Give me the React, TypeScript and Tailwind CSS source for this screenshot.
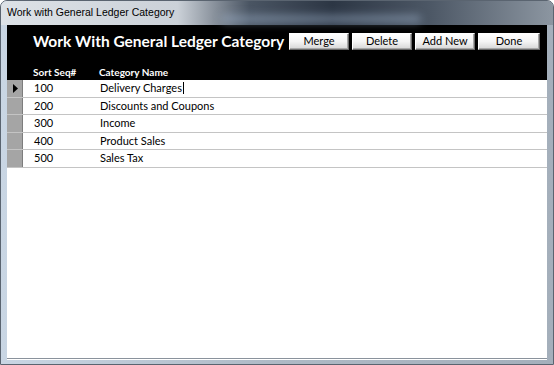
import React from "react";

const rows = [
  { seq: "100", name: "Delivery Charges" },
  { seq: "200", name: "Discounts and Coupons" },
  { seq: "300", name: "Income" },
  { seq: "400", name: "Product Sales" },
  { seq: "500", name: "Sales Tax" },
];

function Btn({ label, w }: { label: string; w: string }) {
  return (
    <div className={`${w} h-[17px] flex items-center justify-center text-[11px] text-black bg-gradient-to-b from-[#ffffff] via-[#f4f4f4] to-[#d6d6d6] border border-t-[#ffffff] border-l-[#ffffff] border-r-[#6b6b6b] border-b-[#6b6b6b] shadow-[inset_-1px_-1px_0_#a8a8a8]`}>
      {label}
    </div>
  );
}

export default function App() {
  return (
    <div className="w-[554px] h-[365px] flex flex-col overflow-hidden rounded-t-[7px] border border-[#5a6470] bg-gradient-to-r from-[#c9d6e4] via-[#aeb9c5] to-[#a4afbb]" style={{ fontFamily: "Lato, 'Open Sans', sans-serif" }}>
      <div className="relative h-[24px] shrink-0 flex items-center pl-[6px] bg-[linear-gradient(to_right,#dde2e7_0%,#cbd1d8_32%,#4a5563_45%,#2c3644_60%,#4d5866_78%,#8c96a1_100%)]">
        <div className="absolute left-[220px] top-[14px] w-[200px] h-[8px] rounded-full bg-[#9fb3cc] opacity-50 blur-[4px]" />
        <span className="relative text-[10.5px] text-black" style={{ fontFamily: "'Liberation Sans', Arial, sans-serif" }}>
          Work with General Ledger Category
        </span>
      </div>
      <div className="flex-1 mx-[6px] mb-[5px] flex flex-col bg-white border-b border-[#8a929c] shadow-[0_1px_0_#ffffff]">
        <div className="h-[55px] shrink-0 bg-black flex flex-col">
          <div className="flex items-center pt-[8px] pl-[26px]">
            <div className="w-[256px] whitespace-nowrap text-white font-bold text-[15.5px] leading-[17px]">Work With General Ledger Category</div>
            <div className="flex gap-[3px]">
              <Btn label="Merge" w="w-[60px]" />
              <Btn label="Delete" w="w-[60px]" />
              <Btn label="Add New" w="w-[60px]" />
              <Btn label="Done" w="w-[62px]" />
            </div>
          </div>
          <div className="mt-auto flex items-center h-[15px] text-white font-bold text-[10px]">
            <div className="w-[26px]" />
            <div className="w-[66px]">Sort Seq#</div>
            <div>Category Name</div>
          </div>
        </div>
        {rows.map((r, i) => (
          <div key={r.seq} className="h-[17.5px] flex items-stretch border-b border-[#c4c4c4] text-[11px] text-black">
            <div className="w-[16px] bg-[#a5a5a5] border-r border-[#7d7d7d] flex items-center justify-center">
              {i === 0 && (
                <svg width="6" height="9" viewBox="0 0 6 9"><path d="M1 0 L6 4.5 L1 9 Z" fill="#000" /></svg>
              )}
            </div>
            <div className="w-[77px] pl-[11px] flex items-center">{r.seq}</div>
            <div className="flex items-center">
              {r.name}
              {i === 0 && <span className="inline-block w-[1px] h-[12px] bg-black ml-[1px]" />}
            </div>
          </div>
        ))}
      </div>
    </div>
  );
}
